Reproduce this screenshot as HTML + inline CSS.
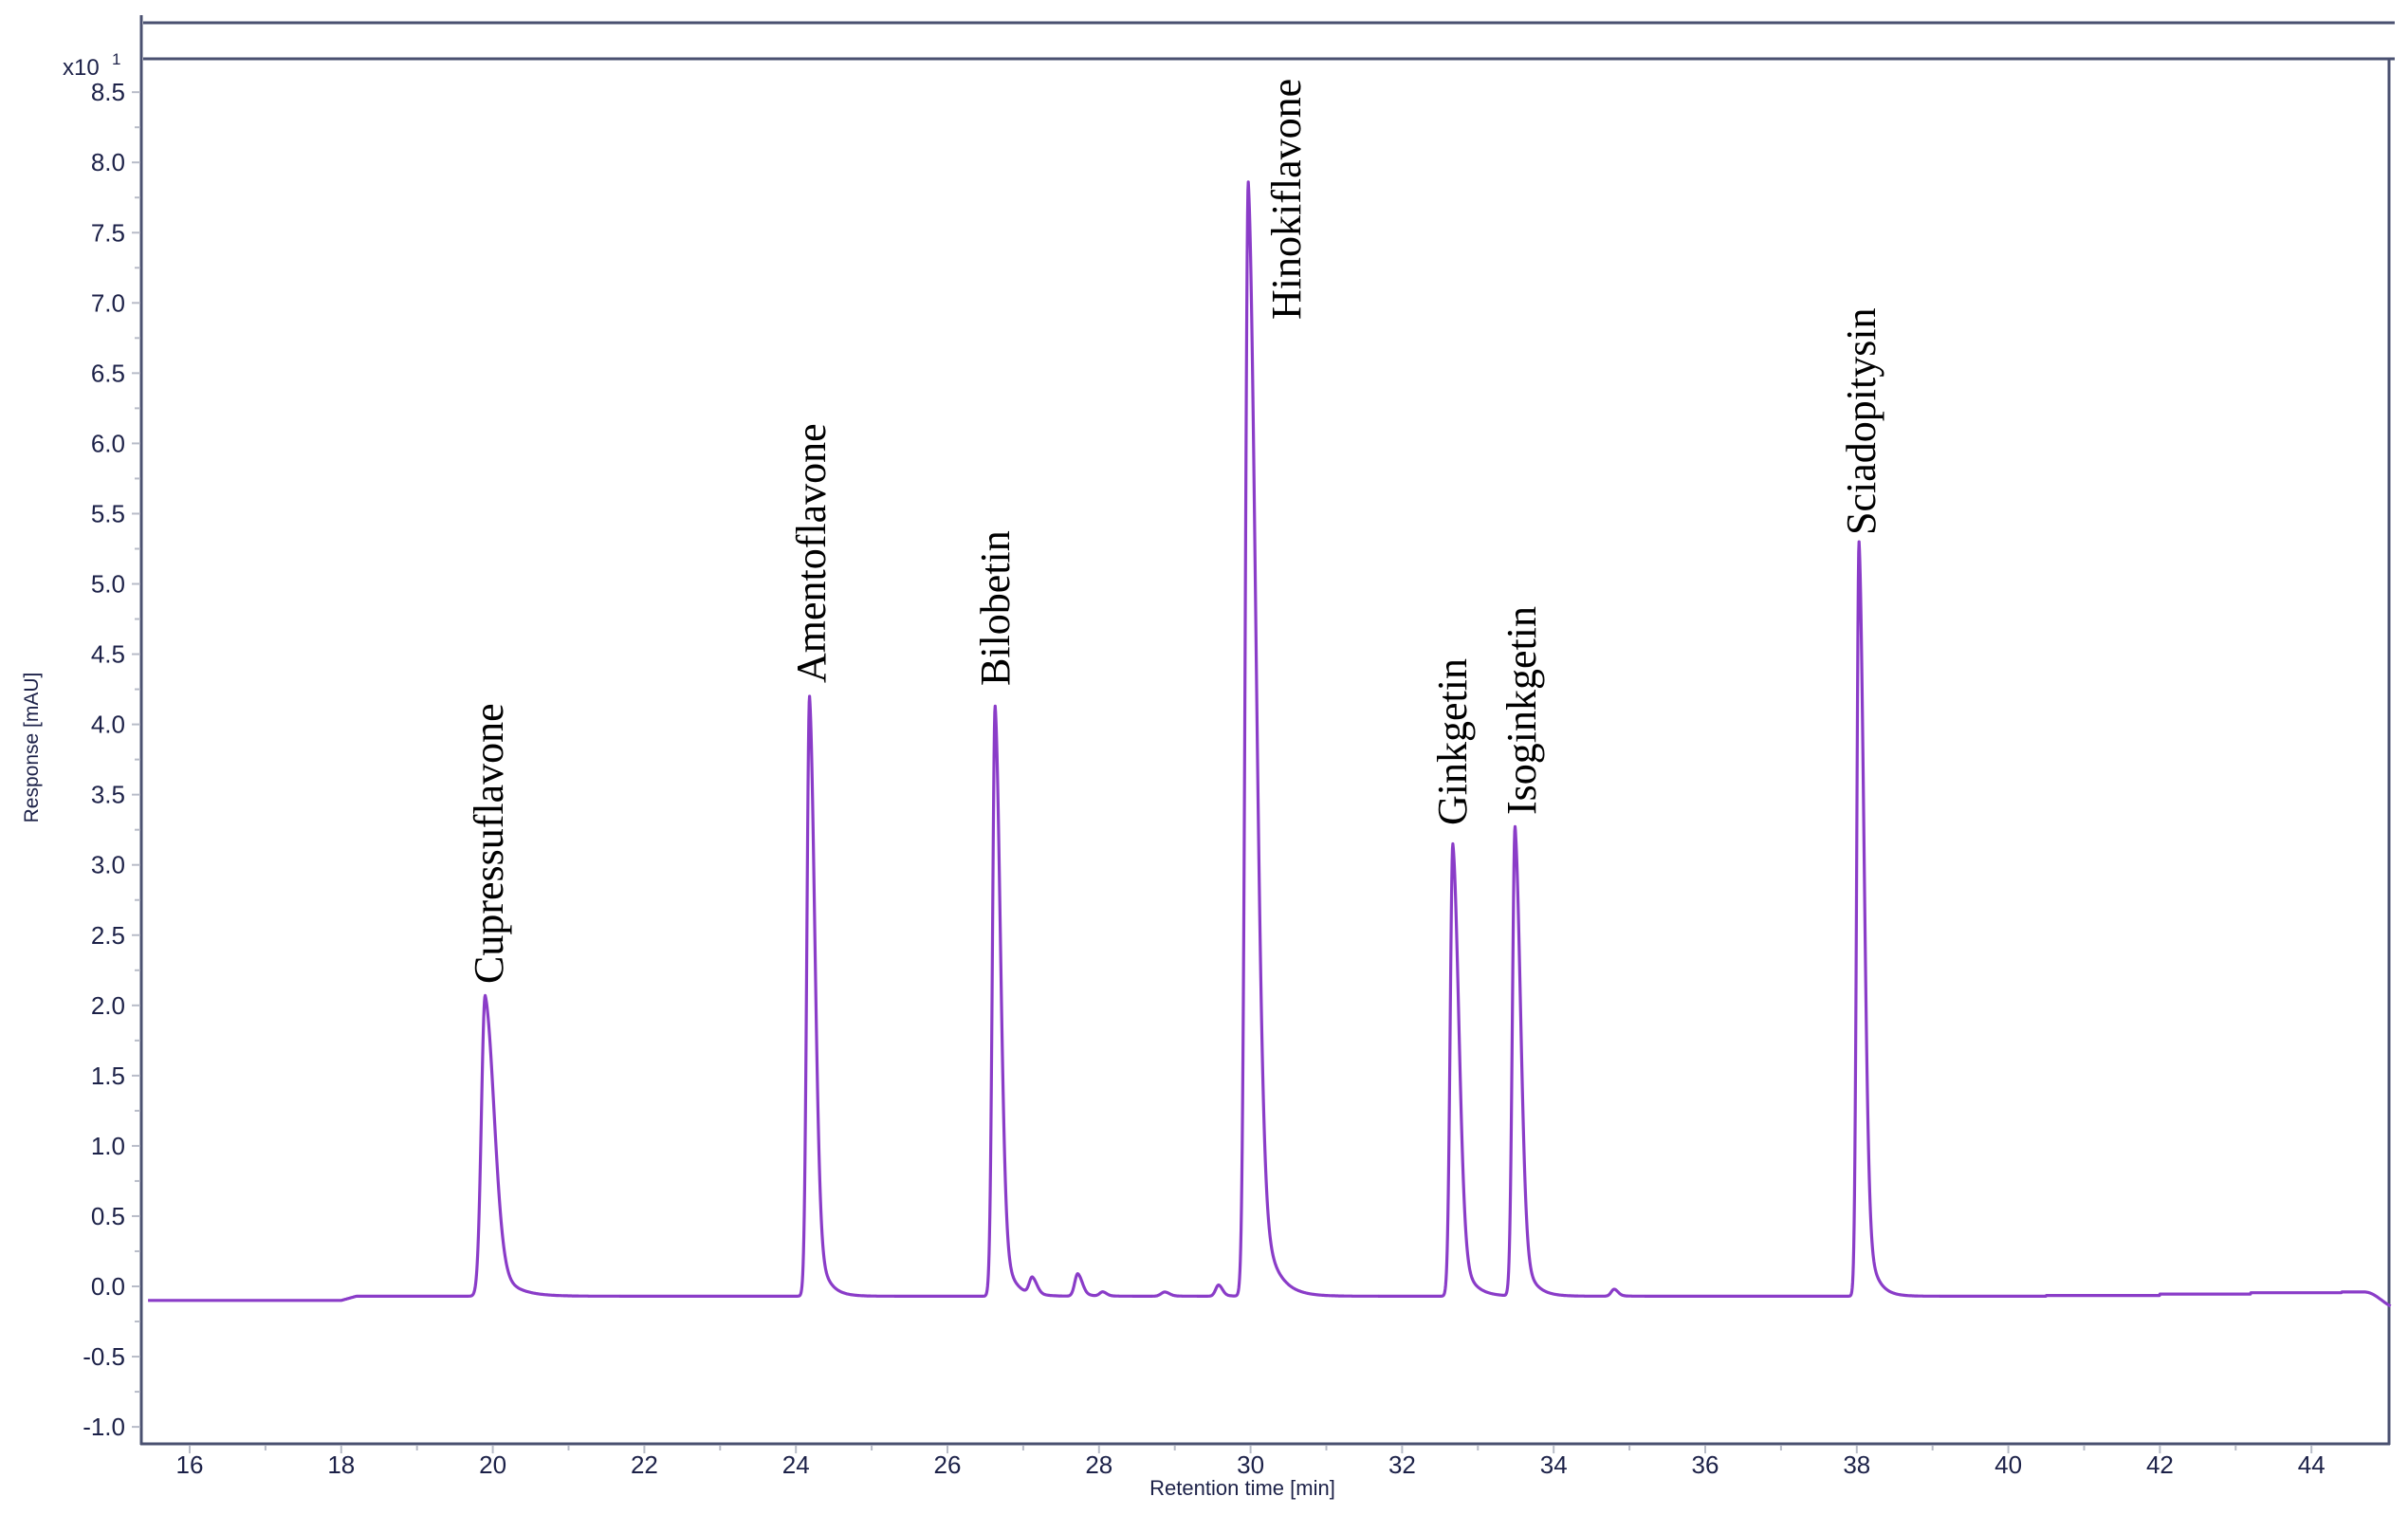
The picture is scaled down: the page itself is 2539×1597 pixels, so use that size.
<!DOCTYPE html>
<html><head><meta charset="utf-8"><style>
html,body{margin:0;padding:0;background:#fff;width:2539px;height:1597px;overflow:hidden}
svg{display:block}
</style></head><body>
<svg id="s" width="2539" height="1597" viewBox="0 0 2539 1597" xmlns="http://www.w3.org/2000/svg">
<rect width="2539" height="1597" fill="#fff"/>
<g stroke="#4a5070" stroke-width="3" fill="none">
<line x1="151" y1="24" x2="2525" y2="24"/>
<line x1="151" y1="62" x2="2525" y2="62"/>
<line x1="149" y1="16" x2="149" y2="1523"/>
<line x1="148" y1="1522" x2="2520" y2="1522"/>
<line x1="2519" y1="62" x2="2519" y2="1523"/>
</g>
<g id="ticks" stroke="#b8bcc8" stroke-width="2"></g>
<g id="labs" font-family="Liberation Sans, Arial, sans-serif" font-size="26" fill="#1c2148"></g>
<text x="66" y="79" font-family="Liberation Sans, sans-serif" font-size="24" fill="#1c2148">x10</text>
<text x="118" y="68" font-family="Liberation Sans, sans-serif" font-size="17" fill="#1c2148">1</text>
<text transform="translate(40,788) rotate(-90)" text-anchor="middle" font-family="Liberation Sans, sans-serif" font-size="21" fill="#1c2148">Response [mAU]</text>
<text x="1310" y="1576" text-anchor="middle" font-family="Liberation Sans, sans-serif" font-size="22" fill="#1c2148">Retention time [min]</text>
<path id="trace" fill="none" stroke="#8a3cc8" stroke-width="3.2" stroke-linejoin="round"/>
<g font-family="Liberation Serif, 'Times New Roman', serif" font-size="44" fill="#000">
<text transform="translate(530,1037) rotate(-90)">Cupressuflavone</text>
<text transform="translate(870,720) rotate(-90)">Amentoflavone</text>
<text transform="translate(1064,723) rotate(-90)">Bilobetin</text>
<text transform="translate(1371,337) rotate(-90)">Hinokiflavone</text>
<text transform="translate(1546,870) rotate(-90)">Ginkgetin</text>
<text transform="translate(1619,859) rotate(-90)">Isoginkgetin</text>
<text transform="translate(1977,564) rotate(-90)">Sciadopitysin</text>
</g>
</svg>
<script>
var NS="http://www.w3.org/2000/svg";
function X(t){return 200+(t-16)*79.9;}
function Y(v){return 1356-v*148.1;}
var tk=document.getElementById('ticks'),lb=document.getElementById('labs');
function el(p,n,a,txt){var e=document.createElementNS(NS,n);for(var k in a)e.setAttribute(k,a[k]);if(txt)e.textContent=txt;p.appendChild(e);}
for(var i=-4;i<=34;i++){var v=i*0.25,y=Y(v);el(tk,'line',{x1:(i%2==0?139:142),y1:y,x2:148,y2:y});
 if(i%2==0){el(lb,'text',{x:132,y:y+9,'text-anchor':'end'},v.toFixed(1));}}
for(var t=16;t<=44;t++){var x=X(t);el(tk,'line',{x1:x,y1:1524,x2:x,y2:(t%2==0?1532:1529)});
 if(t%2==0)el(lb,'text',{x:x,y:1553,'text-anchor':'middle'},String(t));}
var peaks=[[19.9,2.14,0.05,0.12],[24.18,4.27,0.035,0.07],[26.63,4.2,0.035,0.07],[27.12,0.12,0.04,0.06],[27.72,0.16,0.04,0.06],[28.05,0.03,0.04,0.05],[28.87,0.03,0.05,0.06],[29.58,0.08,0.04,0.05],
[29.97,7.93,0.04,0.1],[32.67,3.22,0.035,0.08],[33.49,3.34,0.035,0.075],[34.8,0.05,0.04,0.05],[38.03,5.37,0.03,0.065]];
function base(t){if(t<18)return -0.1;if(t<18.2)return -0.1+(t-18)/0.2*0.03;if(t<40.5)return -0.07;if(t<42)return -0.065;if(t<43.2)return -0.055;if(t<44.4)return -0.045;
 if(t<44.7)return -0.04;var u=Math.min(1,(t-44.7)/0.45);return -0.04-0.115*(0.5-0.5*Math.cos(Math.PI*u));}
function f(t){var v=base(t);for(var i=0;i<peaks.length;i++){var p=peaks[i],d=t-p[0];
 if(d<0)v+=p[1]*Math.exp(-d*d/(2*p[2]*p[2]));else v+=p[1]*(0.8*Math.exp(-d*d/(2*p[3]*p[3]))+0.2*Math.exp(-d/(p[3]*1.8)));}return v;}
var d="",first=true;for(var t=15.45;t<=45.05;t+=0.005){d+=(first?"M":"L")+X(t).toFixed(1)+","+Y(f(t)).toFixed(1);first=false;}
document.getElementById('trace').setAttribute('d',d);
</script>
</body></html>
